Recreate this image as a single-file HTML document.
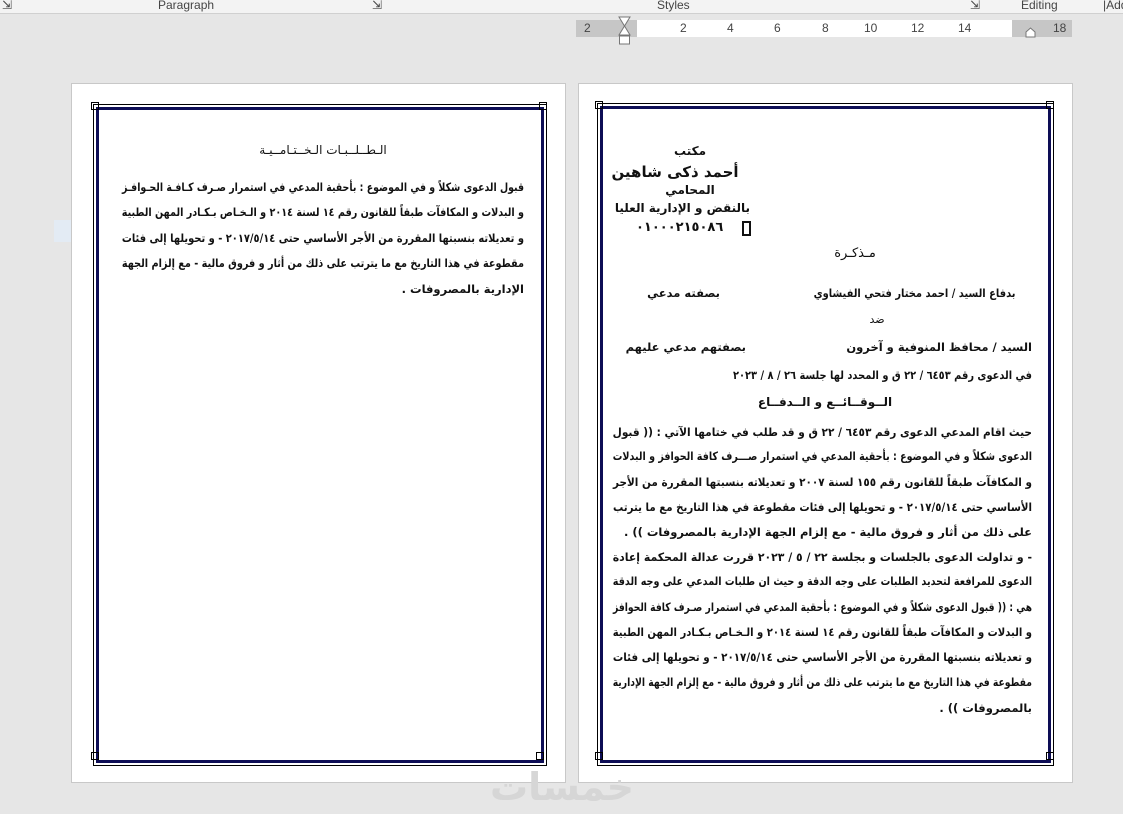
<!DOCTYPE html>
<html><head><meta charset="utf-8"><style>
*{margin:0;padding:0;box-sizing:border-box}
body{width:1123px;height:814px;background:#e6e6e6;position:relative;overflow:hidden;font-family:"DejaVu Sans",sans-serif}
.top{position:absolute;left:0;top:0;width:1123px;height:14px;background:#f3f3f3;border-bottom:1px solid #d0d0d0;font-family:"Liberation Sans",sans-serif;font-size:12px;color:#444}
.top span{position:absolute;top:-2px}
.ab{position:absolute}
.page{position:absolute;top:83px;width:495px;height:700px;background:#fff;border:1px solid #c8c8c8}
.thin{position:absolute;border:1px solid #000}
.thick{position:absolute;border:3px solid #0d0d55}
.ln{position:absolute;direction:rtl;text-align:justify;text-align-last:justify;white-space:nowrap;font-weight:bold;font-size:11.5px;color:#111;line-height:15px;transform-origin:right center}
.c{position:absolute;direction:rtl;text-align:center;white-space:nowrap;font-weight:bold;font-size:11px;color:#111;line-height:14px}
.r{position:absolute;direction:rtl;text-align:right;white-space:nowrap;font-weight:bold;font-size:11.5px;color:#111;line-height:15px}
.corner{position:absolute;width:8px;height:8px;border:1px solid #000;background:transparent}
</style></head><body>
<div class="top">
<span style="left:2px">⇲</span><span style="left:158px">Paragraph</span><span style="left:372px">⇲</span>
<span style="left:657px">Styles</span><span style="left:970px">⇲</span><span style="left:1021px">Editing</span><span style="left:1103px">|Add</span>
</div>
<div class="ab" style="left:576px;top:20px;width:496px;height:17px;background:#c6c6c6"></div>
<div class="ab" style="left:637px;top:20px;width:375px;height:17px;background:#fff"></div>
<div class="ab" style="left:576px;top:20px;width:496px;height:17px;font-family:'Liberation Sans',sans-serif;font-size:12px;color:#444;line-height:17px">
<span class="ab" style="left:8px">2</span><span class="ab" style="left:104px">2</span><span class="ab" style="left:151px">4</span><span class="ab" style="left:198px">6</span><span class="ab" style="left:246px">8</span><span class="ab" style="left:288px">10</span><span class="ab" style="left:335px">12</span><span class="ab" style="left:382px">14</span><span class="ab" style="left:477px">18</span>
</div>
<svg class="ab" style="left:618px;top:16px" width="14" height="29"><path d="M1 1H12L6.5 10Z M1 19H12L6.5 10Z" fill="#fff" stroke="#777"/><rect x="1.5" y="20" width="10" height="8" fill="#fff" stroke="#777"/></svg>
<svg class="ab" style="left:1025px;top:27px" width="12" height="11"><path d="M1 10V5L5.5 1L10 5V10Z" fill="#fff" stroke="#777"/></svg>

<div class="ab" style="left:54px;top:220px;width:95px;height:22px;background:#e3ebf4;color:#c9d3de;font-family:'Liberation Sans',sans-serif;font-size:13px;line-height:22px;padding-left:33px">Full-screen</div>

<div class="page" style="left:71px"></div>
<div class="thin" style="left:93px;top:104px;width:454px;height:662px"></div>
<div class="thick" style="left:96px;top:107px;width:448px;height:656px"></div>
<div class="corner" style="left:91px;top:102px"></div><div class="corner" style="left:539px;top:102px"></div>
<div class="corner" style="left:91px;top:752px"></div><div class="corner" style="left:536px;top:752px"></div>

<div class="c" style="left:223px;top:143px;width:200px;font-weight:normal;letter-spacing:1px;font-size:12px">الـطــلــبـات الـخــتـامــيـة</div>
<div class="ln" style="left:122px;top:180px;width:402px">قبول الدعوى شكلاً و في الموضوع : بأحقية المدعي في استمرار صـرف كـافـة الحـوافـز</div>
<div class="ln" style="left:122px;top:205px;width:402px">و البدلات و المكافآت طبقاً للقانون رقم ١٤ لسنة ٢٠١٤ و الـخـاص بـكـادر المهن الطبية</div>
<div class="ln" style="left:122px;top:231px;width:402px">و تعديلاته بنسبتها المقررة من الأجر الأساسي حتى ٢٠١٧/٥/١٤ - و تحويلها إلى فئات</div>
<div class="ln" style="left:122px;top:256px;width:402px">مقطوعة في هذا التاريخ مع ما يترتب على ذلك من أثار و فروق مالية - مع إلزام الجهة</div>
<div class="r" style="left:122px;top:282px;width:402px">الإدارية بالمصروفات .</div>

<div class="page" style="left:578px"></div>
<div class="thin" style="left:597px;top:103px;width:457px;height:663px"></div>
<div class="thick" style="left:600px;top:106px;width:451px;height:657px"></div>
<div class="corner" style="left:595px;top:101px"></div><div class="corner" style="left:1046px;top:101px"></div>
<div class="corner" style="left:595px;top:752px"></div><div class="corner" style="left:1046px;top:752px"></div>

<div class="c" style="left:620px;top:144px;width:140px;font-size:12px">مكتب</div>
<div class="c" style="left:600px;top:163px;width:150px;font-size:15px;line-height:18px">أحمد ذكى شاهين</div>
<div class="c" style="left:620px;top:183px;width:140px;font-size:12px">المحامي</div>
<div class="c" style="left:620px;top:201px;width:130px;font-size:12px">بالنقض و الإدارية العليا</div>
<div class="ab" style="left:742px;top:221px;width:9px;height:15px;border:2px solid #111"></div>
<div class="ab" style="left:636px;top:220px;font-size:13px;font-weight:bold;letter-spacing:1px;color:#111">٠١٠٠٠٢١٥٠٨٦</div>
<div class="c" style="left:820px;top:247px;width:70px;font-weight:normal;font-size:13px">مـذكـرة</div>
<div class="r" style="left:830px;top:286px;width:202px">بدفاع السيد / احمد مختار فتحي الفيشاوي</div>
<div class="r" style="left:640px;top:286px;width:80px">بصفته مدعي</div>
<div class="c" style="left:857px;top:313px;width:40px;font-weight:normal">ضد</div>
<div class="r" style="left:830px;top:340px;width:202px">السيد / محافظ المنوفية و آخرون</div>
<div class="r" style="left:620px;top:340px;width:126px">بصفتهم مدعي عليهم</div>
<div class="ln" style="left:733px;top:368px;width:299px">في الدعوى رقم ٦٤٥٣ / ٢٢ ق و المحدد لها جلسة ٢٦ / ٨ / ٢٠٢٣</div>
<div class="c" style="left:725px;top:395px;width:200px;letter-spacing:1px;font-size:12px">الــوقــائــع و الــدفــاع</div>
<div class="ln" style="left:613px;top:425px;width:419px">حيث اقام المدعي الدعوى رقم ٦٤٥٣ / ٢٢ ق و قد طلب في ختامها الآتي : (( قبول</div>
<div class="ln" style="left:613px;top:449px;width:419px">الدعوى شكلاً و في الموضوع : بأحقية المدعي في استمرار صـــرف كافة الحوافز و البدلات</div>
<div class="ln" style="left:613px;top:475px;width:419px">و المكافآت طبقاً للقانون رقم ١٥٥ لسنة ٢٠٠٧ و تعديلاته بنسبتها المقررة من الأجر</div>
<div class="ln" style="left:613px;top:500px;width:419px">الأساسي حتى ٢٠١٧/٥/١٤ - و تحويلها إلى فئات مقطوعة في هذا التاريخ مع ما يترتب</div>
<div class="r" style="left:613px;top:525px;width:419px">على ذلك من أثار و فروق مالية - مع إلزام الجهة الإدارية بالمصروفات )) .</div>
<div class="ln" style="left:613px;top:550px;width:419px">- و تداولت الدعوى بالجلسات و بجلسة ٢٢ / ٥ / ٢٠٢٣ قررت عدالة المحكمة إعادة</div>
<div class="ln" style="left:613px;top:574px;width:419px">الدعوى للمرافعة لتحديد الطلبات على وجه الدقة و حيث ان طلبات المدعي على وجه الدقة</div>
<div class="ln" style="left:613px;top:600px;width:419px">هي : (( قبول الدعوى شكلاً و في الموضوع : بأحقية المدعي في استمرار صـرف كافة الحوافز</div>
<div class="ln" style="left:613px;top:625px;width:419px">و البدلات و المكافآت طبقاً للقانون رقم ١٤ لسنة ٢٠١٤ و الـخـاص بـكـادر المهن الطبية</div>
<div class="ln" style="left:613px;top:650px;width:419px">و تعديلاته بنسبتها المقررة من الأجر الأساسي حتى ٢٠١٧/٥/١٤ - و تحويلها إلى فئات</div>
<div class="ln" style="left:613px;top:675px;width:419px">مقطوعة في هذا التاريخ مع ما يترتب على ذلك من أثار و فروق مالية - مع إلزام الجهة الإدارية</div>
<div class="r" style="left:613px;top:701px;width:419px">بالمصروفات )) .</div>

<div class="ab" style="left:490px;top:765px;font-size:38px;color:#d6d6d6;font-weight:bold;direction:rtl">خمسات</div>
<script>
document.querySelectorAll('.ln,.r').forEach(function(el){
  var cw=el.clientWidth, sw=el.scrollWidth;
  if(sw>cw+1){
    var left=parseFloat(el.style.left);
    el.style.left=(left-(sw-cw))+'px';
    el.style.width=sw+'px';
    el.style.transform='scaleX('+(cw/sw)+')';
  }
});
</script>
</body></html>
